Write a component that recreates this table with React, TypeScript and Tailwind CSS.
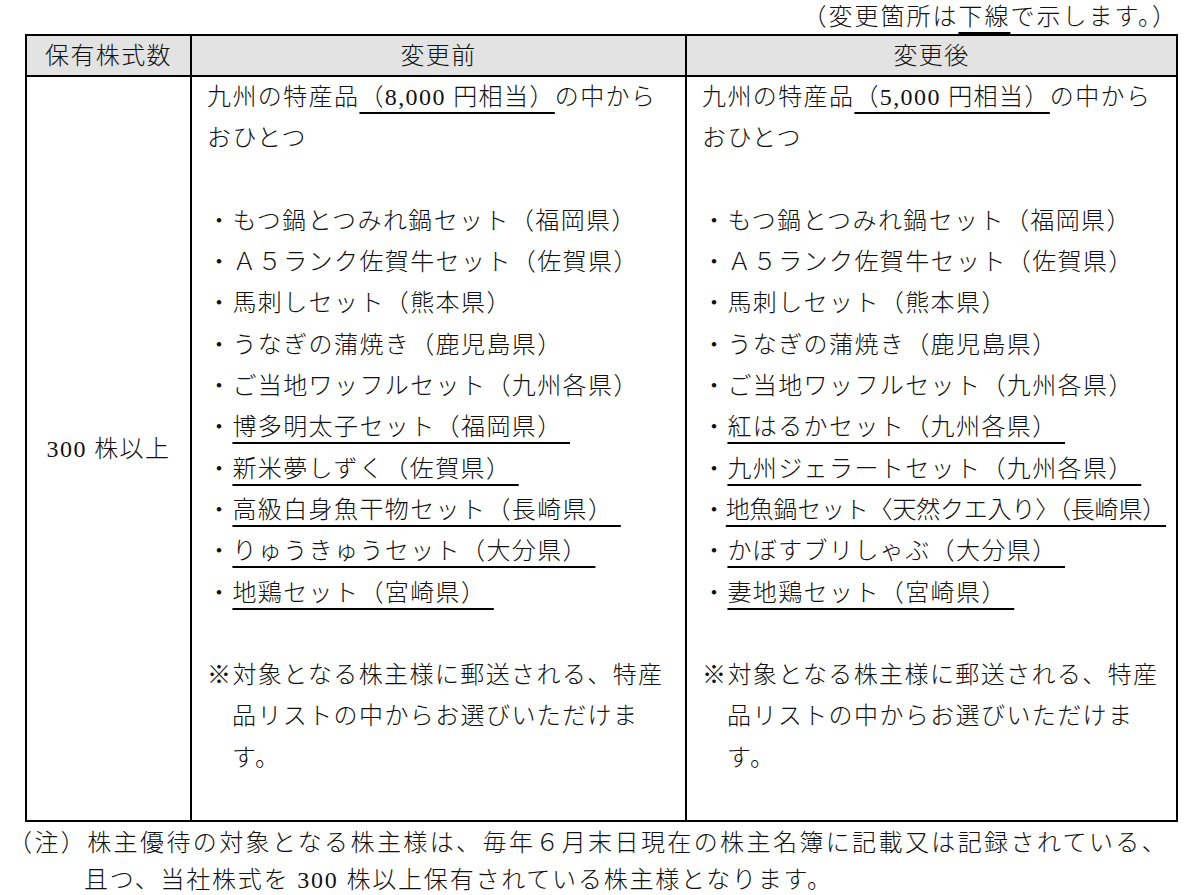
import React from "react";

const FONT = { fontFamily: '"Liberation Serif", "Noto Sans CJK JP", serif' };

const common = [
  "もつ鍋とつみれ鍋セット（福岡県）",
  "Ａ５ランク佐賀牛セット（佐賀県）",
  "馬刺しセット（熊本県）",
  "うなぎの蒲焼き（鹿児島県）",
  "ご当地ワッフルセット（九州各県）",
];

const before = [
  "博多明太子セット（福岡県）",
  "新米夢しずく（佐賀県）",
  "高級白身魚干物セット（長崎県）",
  "りゅうきゅうセット（大分県）",
  "地鶏セット（宮崎県）",
];

const after = [
  "紅はるかセット（九州各県）",
  "九州ジェラートセット（九州各県）",
  "地魚鍋セット〈天然クエ入り〉（長崎県）",
  "かぼすブリしゃぶ（大分県）",
  "妻地鶏セット（宮崎県）",
];

function U({ children }: { children: React.ReactNode }) {
  return (
    <span className="underline decoration-[1.8px] underline-offset-[7px] decoration-black">
      {children}
    </span>
  );
}

function Cell({ price, changed }: { price: string; changed: string[] }) {
  return (
    <div className="pl-[15px] leading-[41.3px] whitespace-nowrap">
      <div>
        九州の特産品<U>{"（" + price + "\u00a0円相当）"}</U>の中から
      </div>
      <div>おひとつ</div>
      <div>&nbsp;</div>
      {common.map((t) => (
        <div key={t}>・{t}</div>
      ))}
      {changed.map((t) =>
        t.includes("〈") ? (
          <div key={t} className="tracking-[-0.2px]">
            ・<U>{t}</U>
          </div>
        ) : (
          <div key={t}>
            ・<U>{t + "\u00a0"}</U>
          </div>
        )
      )}
      <div>&nbsp;</div>
      <div>※対象となる株主様に郵送される、特産</div>
      <div className="pl-[25px]">品リストの中からお選びいただけま</div>
      <div className="pl-[25px]">す。</div>
      <div>&nbsp;</div>
    </div>
  );
}

export default function App() {
  return (
    <div
      className="w-[1200px] h-[895px] bg-white text-[#111] text-[24px] tracking-[1.4px] font-light overflow-hidden"
      style={FONT}
    >
      <div className="h-[34px] flex items-center justify-end pr-[22px] text-[24px] tracking-[2px] leading-none">
        （変更箇所は<U>下線</U>で示します。）
      </div>
      <div className="ml-[25px] w-[1153px] border-2 border-black">
        <div className="grid grid-cols-[163px_495px_491px] bg-[#e3e3e3] border-b-2 border-black h-[41px] items-center leading-none">
          <div className="text-center">保有株式数</div>
          <div className="text-center border-l-2 border-black h-full flex items-center justify-center">変更前</div>
          <div className="text-center border-l-2 border-black h-full flex items-center justify-center">変更後</div>
        </div>
        <div className="grid grid-cols-[163px_495px_491px]">
          <div className="flex items-center justify-center">300&nbsp;株以上</div>
          <div className="border-l-2 border-black">
            <Cell price="8,000" changed={before} />
          </div>
          <div className="border-l-2 border-black">
            <Cell price="5,000" changed={after} />
          </div>
        </div>
      </div>
      <div className="mt-[3px] leading-[37px] text-[24px] whitespace-nowrap">
        <div className="pl-[8px] tracking-[2.4px]">（注）株主優待の対象となる株主様は、毎年６月末日現在の株主名簿に記載又は記録されている、</div>
        <div className="pl-[84px] tracking-[1.8px]">且つ、当社株式を 300 株以上保有されている株主様となります。</div>
      </div>
    </div>
  );
}
